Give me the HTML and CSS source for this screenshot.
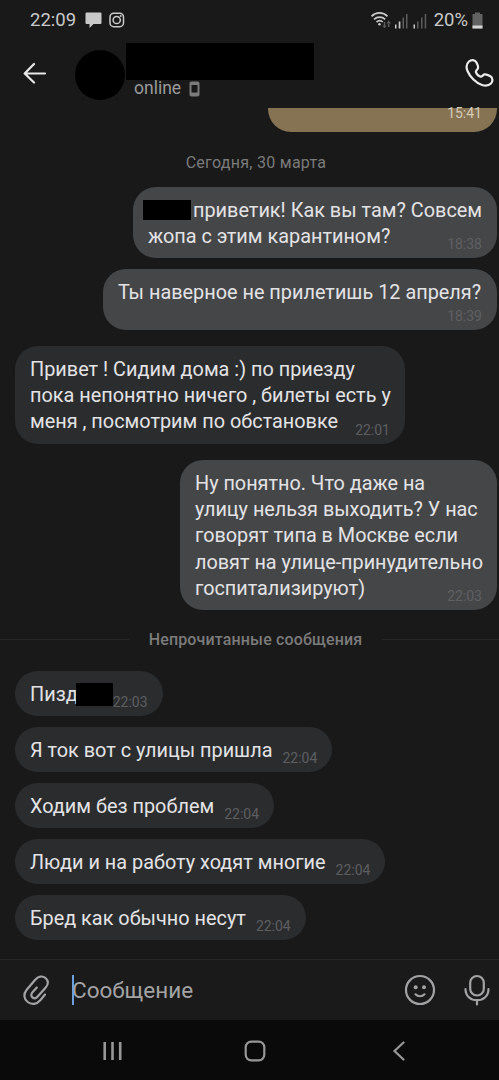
FILE: index.html
```
<!DOCTYPE html>
<html lang="ru">

<head>
    <meta charset="UTF-8">
    <meta name="viewport" content="width=device-width, initial-scale=1.0">
    <title>Чат</title>
    <link rel="stylesheet" href="styles.css">
</head>

<body>
    <div class="status">
        <span class="clock">22:09</span>
        <svg class="notice" width="40" height="18" viewBox="0 0 40 18">
            <path d="M1.500 1.500h14a1 1 0 0 1 1 1v9.500a1 1 0 0 1-1 1H8.500L4.500 17v-4h-3a1 1 0 0 1-1-1V2.500a1 1 0 0 1 1-1z" fill="#c9c9c9"/>
            <g fill="none" stroke="#c9c9c9" stroke-width="1.500">
                <rect x="25" y="2.200" width="13.500" height="13.500" rx="3.800"/>
                <circle cx="31.700" cy="9" r="3.600"/>
            </g>
            <circle cx="35.700" cy="5" r="1" fill="#c9c9c9"/>
        </svg>
        <div class="system">
            <svg width="58" height="18" viewBox="0 0 58 18">
                <g fill="none" stroke="#c9c9c9" stroke-width="1.700">
                    <path d="M1.500 5.300c4.500-4.500 11.500-4.500 16 0"/>
                    <path d="M4 8.300c3.200-3 8-3 11.200 0"/>
                    <path d="M6.500 11c2-1.700 4.500-1.700 6.300 0"/>
                </g>
                <circle cx="9.500" cy="13.300" r="1.300" fill="#c9c9c9"/>
                <path d="M12.300 14.500h4.400l-2.200 2.800zM13.800 11h1.400v4h-1.400zM16.500 12.500h4.400l-2.200-3zM18 12h1.400v4H18z" fill="#606060"/>
                <path d="M25 13.500h1.500v4H25zM28.700 10.500h1.700v7h-1.700zM43.500 13.500H45v4h-1.500z" fill="#c9c9c9"/>
                <path d="M32.500 6.500h1.500v11h-1.500zM36 3h1.500v14.500H36zM47 10.500h1.500v7H47zM51 6.500h1.500v11H51zM54.700 3h1.500v14.500h-1.500z" fill="#5d5d5d"/>
            </svg>
            <span class="charge">20%</span>
            <svg width="11" height="18" viewBox="0 0 11 18">
                <path d="M3 1.500h5V3h2.500v14.500H.500V3H3z" fill="#626262"/>
                <path d="M.500 14.500h10v3H.500z" fill="#d5d5d5"/>
            </svg>
        </div>
    </div>

    <div class="header">
        <svg class="back" width="24" height="22" viewBox="0 0 24 22">
            <path d="M22 11.500H2M11 2L1.700 11.500 11 20.500" fill="none" stroke="#e8e8e8" stroke-width="2.200" stroke-linecap="round" stroke-linejoin="round"/>
        </svg>
        <div class="avatar"></div>
        <div class="contact">
            <div class="name"></div>
            <div class="online">
                <span>online</span>
                <svg width="11" height="16" viewBox="0 0 11 16">
                    <path d="M2.500.500h6a2 2 0 0 1 2 2v11a2 2 0 0 1-2 2h-6a2 2 0 0 1-2-2v-11a2 2 0 0 1 2-2zM2.500 4v7.500h6V4z" fill="#7b7b7b" fill-rule="evenodd"/>
                </svg>
            </div>
        </div>
        <svg class="call" width="30" height="30" viewBox="0 0 30 30">
            <path d="M4 3.500C6 1.500 10 1.500 11.500 4.500c1 2 2 4 1.500 5.500-.500 2-2.800 2.500-2 4.500.700 1.700 2.300 3.300 4 4 2 .800 2.600-1.500 4.500-2.100 1.600-.400 3.700.600 5.500 1.600 3 1.600 3 5.500 1 7.500-2 2-5.500 2.600-9 1.500C11 25 5 19 2.500 13c-1.400-3.500-.900-7.500 1.500-9.500z" fill="none" stroke="#ececec" stroke-width="2.200" stroke-linejoin="round"/>
        </svg>
    </div>

    <div class="chat">
        <div class="gift"><span>15:41</span></div>
        <div class="date">Сегодня, 30 марта</div>

        <div class="msg out first">
            <div class="text"><span class="hidden-name"></span>приветик! Как вы там? Совсем<br>жопа с этим карантином?</div>
            <span class="time">18:38</span>
        </div>
        <div class="msg out second">
            <div class="text">Ты наверное не прилетишь 12 апреля?</div>
            <span class="time">18:39</span>
        </div>
        <div class="msg in long">
            <div class="text">Привет ! Сидим дома :) по приезду<br>пока непонятно ничего , билеты есть у<br>меня , посмотрим по обстановке</div>
            <span class="time">22:01</span>
        </div>
        <div class="msg out third">
            <div class="text">Ну понятно. Что даже на<br>улицу нельзя выходить? У нас<br>говорят типа в Москве если<br>ловят на улице-принудительно<br>госпитализируют)</div>
            <span class="time">22:03</span>
        </div>

        <div class="unread">Непрочитанные сообщения</div>

        <div class="msg in">
            <div class="text">Пизд<span class="hidden-word"></span></div>
            <span class="time">22:03</span>
        </div>
        <div class="msg in">
            <div class="text">Я ток вот с улицы пришла</div>
            <span class="time">22:04</span>
        </div>
        <div class="msg in">
            <div class="text">Ходим без проблем</div>
            <span class="time">22:04</span>
        </div>
        <div class="msg in">
            <div class="text">Люди и на работу ходят многие</div>
            <span class="time">22:04</span>
        </div>
        <div class="msg in">
            <div class="text">Бред как обычно несут</div>
            <span class="time">22:04</span>
        </div>
    </div>

    <div class="composer">
        <svg width="28" height="32" viewBox="0 0 28 32">
            <path d="M23 20.500l-4.500 5.500c-3.800 4.500-9 5-12.800 2-4-3.200-4.500-8-1-12.200L13 6c3.200-3.800 7.500-4.500 10.500-2s3.200 6 .200 9.500l-8 9c-1.700 1.900-3.800 2.200-5.300.900s-1.500-3.300.100-5.100l4.300-4.800" fill="none" stroke="#a3a3a5" stroke-width="2.200" stroke-linecap="round" stroke-linejoin="round"/>
        </svg>
        <div class="field"><span class="caret"></span>Сообщение</div>
        <svg width="32" height="32" viewBox="0 0 32 32">
            <circle cx="16" cy="16" r="14" fill="none" stroke="#a3a3a5" stroke-width="2.200"/>
            <circle cx="11.700" cy="13.200" r="2" fill="#a3a3a5"/>
            <circle cx="20" cy="13.200" r="2" fill="#a3a3a5"/>
            <path d="M11.500 20.300c2.500 2.600 6.500 2.600 9 0" fill="none" stroke="#a3a3a5" stroke-width="2.200" stroke-linecap="round"/>
        </svg>
        <svg class="mic" width="28" height="32" viewBox="0 0 28 32">
            <g fill="none" stroke="#a3a3a5" stroke-width="2.200" stroke-linecap="round">
                <rect x="7.200" y="2" width="13.600" height="19.500" rx="6.800"/>
                <path d="M2.500 15c0 7 5 11.200 11.500 11.200S25.500 22 25.500 15M14 26.500v4"/>
            </g>
        </svg>
    </div>

    <div class="nav">
        <svg width="20" height="20" viewBox="0 0 20 20">
            <path d="M1.700 1v18M9.500 1v18M17.200 1v18" stroke="#979797" stroke-width="2.600"/>
        </svg>
        <svg class="home" width="22" height="22" viewBox="0 0 22 22">
            <rect x="1.700" y="1.700" width="18.600" height="18.600" rx="5.500" fill="none" stroke="#979797" stroke-width="2.200"/>
        </svg>
        <svg width="14" height="20" viewBox="0 0 14 20">
            <path d="M11.500 1.500L2.500 10l9 8.500" fill="none" stroke="#979797" stroke-width="2.200" stroke-linecap="round"/>
        </svg>
    </div>
</body>

</html>
```
FILE: styles.css
```
*{
    margin: 0;
    padding: 0;
    box-sizing: border-box;
}
body{
    width: 499px;
    height: 1080px;
    overflow: hidden;
    background-color: #191919;
    color: #e3e3e5;
    font-family: Roboto, "Liberation Sans", sans-serif;
    display: flex;
    flex-direction: column;
}
svg{
    display: block;
    flex: none;
}

/* status bar */
.status{
    height: 40px;
    padding: 0 16px 0 30px;
    display: flex;
    align-items: center;
    color: #c9c9c9;
    font-size: 18.500px;
}
.notice{
    margin-left: 9px;
}
.system{
    margin-left: auto;
    display: flex;
    align-items: center;
}
.system svg:first-child{
    margin-top: -1px;
}
.charge{
    margin: 0 4px 0 6px;
}

/* header */
.header{
    height: 68px;
    padding: 0 4px 0 23px;
    display: flex;
    align-items: flex-start;
}
.back{
    margin-top: 22px;
}
.avatar{
    width: 50px;
    height: 50px;
    margin: 10px 0 0 28px;
    border-radius: 50%;
    background-color: #000;
}
.contact{
    margin-top: 3px;
}
.name{
    width: 188px;
    height: 37px;
    margin-left: 1px;
    background-color: #000;
}
.online{
    display: flex;
    align-items: center;
    gap: 8px;
    height: 17px;
    padding-left: 9px;
    color: #9b9b9b;
    font-size: 17.500px;
}
.online span{
    margin-top: -1px;
}
.call{
    margin: 18px 0 0 auto;
}

/* messages */
.chat{
    height: 851px;
    padding: 0 2px 0 15px;
    display: flex;
    flex-direction: column;
    align-items: flex-start;
}
.gift{
    width: 229px;
    height: 24px;
    align-self: flex-end;
    padding-right: 15px;
    border-radius: 0 0 23px 23px;
    background-color: #857353;
    color: #d5ccb8;
    font-size: 14px;
    line-height: 11px;
    text-align: right;
}
.date{
    align-self: center;
    height: 55px;
    line-height: 61px;
    color: #7b7b7b;
    font-size: 16px;
    letter-spacing: 0.280px;
}
.msg{
    position: relative;
    display: flex;
    align-items: flex-end;
    gap: 10px;
    height: 45px;
    flex: none;
    padding: 8px 15px 7.500px;
    margin-bottom: 11px;
    border-radius: 23px;
    background-color: #2b2c2e;
    font-size: 19.880px;
    line-height: 26.300px;
    white-space: nowrap;
}
.time{
    color: #5d5e60;
    font-size: 14px;
    line-height: 14px;
}
.out{
    align-self: flex-end;
    align-items: flex-start;
    background-color: #454648;
}
.out, .long{
    padding-top: 10.800px;
}
.out .time, .long .time{
    position: absolute;
    right: 15px;
    bottom: 7px;
}
.out .time{
    color: #5f6062;
}
.first{
    width: 364px;
    height: 71px;
}
.second{
    width: 394px;
    height: 61px;
    margin-bottom: 16px;
}
.long{
    width: 390px;
    height: 98px;
    align-items: flex-start;
    margin-bottom: 16px;
}
.third{
    width: 317px;
    height: 150px;
    margin-bottom: 0;
    font-size: 19.820px;
}
.hidden-name{
    display: inline-block;
    width: 48px;
    height: 20px;
    margin: 0 2px 0 -5px;
    vertical-align: -3px;
    background-color: #000;
}
.hidden-word{
    display: inline-block;
    width: 37px;
    height: 23px;
    margin: 0 -10px 0 -2px;
    vertical-align: -5px;
    background-color: #000;
}
.unread{
    width: 499px;
    height: 61px;
    margin-left: -15px;
    padding: 0 0 3px 12px;
    display: flex;
    align-items: center;
    gap: 20px;
    color: #7b7b7b;
    font-size: 16px;
    font-weight: 500;
    letter-spacing: 0.150px;
    white-space: nowrap;
}
.unread::before, .unread::after{
    content: "";
    flex: 1;
    height: 1px;
    background-color: #262626;
}
.unread::before{
    margin-left: -12px;
    flex-basis: 12px;
}

/* message input */
.composer{
    height: 61px;
    padding: 0 8px 0 22px;
    display: flex;
    align-items: center;
    border-top: 1px solid #252525;
    background-color: #1a1a1a;
}
.field{
    position: relative;
    flex: 1;
    padding-left: 22px;
    color: #a3a3a5;
    font-size: 22.500px;
}
.caret{
    position: absolute;
    left: 22px;
    top: -2px;
    width: 2px;
    height: 30px;
    background-color: #6d9fdb;
}
.mic{
    margin-left: 27px;
}

/* system buttons */
.nav{
    height: 60px;
    padding: 2px 93px 0 103px;
    display: flex;
    align-items: center;
    justify-content: space-between;
    background-color: #0a0a0a;
}
.home{
    margin-right: 5px;
}
```
